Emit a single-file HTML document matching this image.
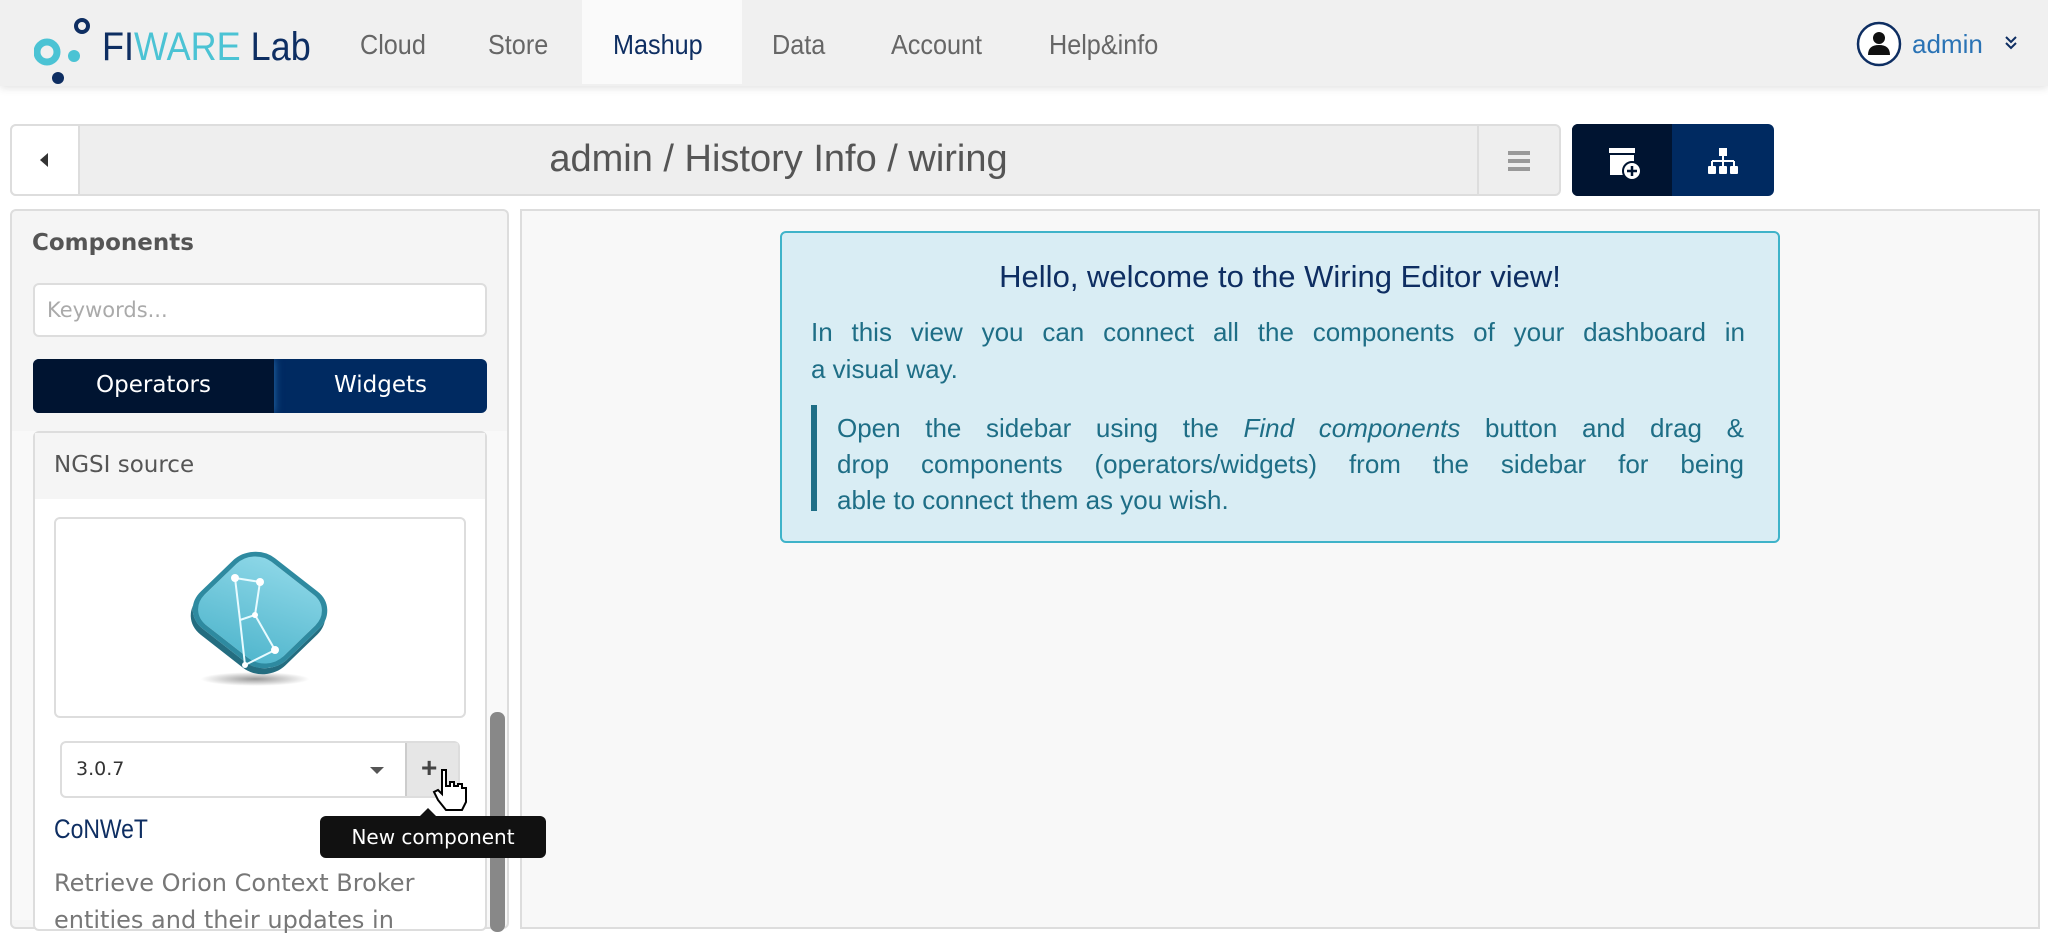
<!DOCTYPE html>
<html><head><meta charset="utf-8"><style>
*{box-sizing:border-box;margin:0;padding:0}
body{width:2048px;height:920px;overflow:hidden;background:#fff;font-family:"Liberation Sans",sans-serif;position:relative}
.abs{position:absolute}
.nav{left:0;top:0;width:2048px;height:86px;background:#f0f0f0;box-shadow:0 2px 8px rgba(0,0,0,.12)}
.navl{top:29px;font-size:28px;color:#666;transform:scaleX(.9);transform-origin:left}
.dv{font-family:"DejaVu Sans",sans-serif}
.j{text-align:justify;text-align-last:justify;white-space:nowrap;display:block}
.top{z-index:10}
</style></head><body>
<div class="abs nav"></div>
<svg class="abs" style="left:34px;top:18px" width="60" height="68" viewBox="0 0 60 68">
<circle cx="13" cy="34" r="10" fill="none" stroke="#4bc3d4" stroke-width="7"/>
<circle cx="48" cy="8" r="6" fill="none" stroke="#0e2e62" stroke-width="4"/>
<circle cx="40" cy="38" r="6" fill="#4bc3d4"/>
<circle cx="24" cy="60" r="6" fill="#0e2e62"/>
</svg>
<div class="abs" style="left:102px;top:25px;font-size:40px;transform:scaleX(.9);transform-origin:left"><span style="color:#0e2e62">FI</span><span style="color:#4bc3d4">WARE</span><span style="color:#0e2e62"> Lab</span></div>
<div class="abs" style="left:582px;top:0;width:160px;height:84px;background:#fafafa"></div>
<div class="abs navl" style="left:360px">Cloud</div>
<div class="abs navl" style="left:488px">Store</div>
<div class="abs navl" style="left:613px;color:#0e2e62">Mashup</div>
<div class="abs navl" style="left:772px">Data</div>
<div class="abs navl" style="left:891px">Account</div>
<div class="abs navl" style="left:1049px">Help&amp;info</div>
<svg class="abs" style="left:1856px;top:21px" width="46" height="46" viewBox="0 0 46 46"><circle cx="23" cy="23" r="21" fill="#fff" stroke="#0e2e62" stroke-width="2.5"/><circle cx="23" cy="17" r="6" fill="#111"/><path d="M12 34 Q12 24 23 24 Q34 24 34 34 Z" fill="#111"/></svg>
<div class="abs" style="left:1912px;top:29px;font-size:26px;color:#2a73b5">admin</div>
<svg class="abs" style="left:2004px;top:35px" width="14" height="16" viewBox="0 0 14 16"><path d="M2 2l5 5 5-5M2 8l5 5 5-5" stroke="#0e2e62" stroke-width="2" fill="none"/></svg>

<div class="abs" style="left:10px;top:124px;width:1551px;height:72px;background:#eee;border:2px solid #ddd;border-radius:6px"></div>
<div class="abs" style="left:10px;top:124px;width:70px;height:72px;background:#fff;border:2px solid #ddd;border-radius:6px 0 0 6px"></div>
<div class="abs" style="left:40px;top:153px;width:0;height:0;border-top:7px solid transparent;border-bottom:7px solid transparent;border-right:8px solid #333"></div>
<div class="abs" style="left:1477px;top:126px;width:2px;height:68px;background:#ddd"></div>
<div class="abs" style="left:1508px;top:151px;width:22px;height:4px;background:#999;box-shadow:0 8px 0 #999,0 16px 0 #999"></div>
<div class="abs" style="left:80px;top:138px;width:1397px;text-align:center;font-size:38px;color:#555">admin / History Info / wiring</div>
<div class="abs" style="left:1572px;top:124px;width:202px;height:72px;background:#002a61;border-radius:6px;overflow:hidden"><div style="width:100px;height:72px;background:#001431"></div></div>
<svg class="abs" style="left:1606px;top:146px" width="36" height="36" viewBox="0 0 36 36"><rect x="3" y="2" width="26" height="5" fill="#fff"/><rect x="4" y="9" width="24" height="20" fill="#fff"/><circle cx="26" cy="25" r="9" fill="#fff" stroke="#001431" stroke-width="2"/><path d="M26 20v10M21 25h10" stroke="#001431" stroke-width="2.5"/></svg>
<svg class="abs" style="left:1706px;top:146px" width="34" height="32" viewBox="0 0 34 32"><rect x="13" y="2" width="8" height="8" fill="#fff"/><path d="M17 10v5M6 15h22M6 15v5M17 15v5M28 15v5" stroke="#fff" stroke-width="2"/><rect x="2" y="20" width="8" height="8" rx="1" fill="#fff"/><rect x="13" y="20" width="8" height="8" rx="1" fill="#fff"/><rect x="24" y="20" width="8" height="8" rx="1" fill="#fff"/></svg>

<div class="abs" style="left:10px;top:209px;width:499px;height:720px;background:#f5f5f5;border:2px solid #ddd;border-radius:6px"></div>
<div class="abs dv" style="left:32px;top:230px;font-size:23px;font-weight:bold;color:#555">Components</div>
<div class="abs dv" style="left:33px;top:283px;width:454px;height:54px;background:#fff;border:2px solid #ddd;border-radius:6px;padding:13px 12px;font-size:21px;color:#aaa">Keywords...</div>
<div class="abs" style="left:33px;top:359px;width:454px;height:54px;background:#002a61;border-radius:6px;overflow:hidden"><div style="width:241px;height:54px;background:#001431;box-shadow:0 0 8px #2a73b5"></div></div>
<div class="abs dv" style="left:33px;top:372px;width:241px;text-align:center;font-size:23px;color:#fff">Operators</div>
<div class="abs dv" style="left:274px;top:372px;width:213px;text-align:center;font-size:23px;color:#fff">Widgets</div>
<div class="abs" style="left:12px;top:431px;width:495px;height:489px;background:#f9f9f9"></div>
<div class="abs" style="left:33px;top:431px;width:454px;height:500px;background:#fff;border:2px solid #ddd;border-radius:6px"></div>
<div class="abs" style="left:35px;top:433px;width:450px;height:66px;background:#f5f5f5"></div>
<div class="abs dv" style="left:54px;top:452px;font-size:23px;color:#555">NGSI source</div>
<div class="abs" style="left:54px;top:517px;width:412px;height:201px;border:2px solid #ddd;border-radius:6px;background:#fff"></div>
<div class="abs" style="left:200px;top:672px;width:110px;height:14px;border-radius:50%;background:radial-gradient(#999,transparent 70%)"></div>
<div class="abs" style="left:205px;top:560px;width:110px;height:100px;border-radius:28px;background:linear-gradient(160deg,#8fd8e8,#4fb5cc);border:5px solid #2e8aa0;box-shadow:3px 6px 0 #246d80;transform:rotate(38deg) skewX(-8deg)"></div>
<svg class="abs" style="left:205px;top:560px" width="110" height="110" viewBox="0 0 110 110"><path d="M30 18L55 22L50 55L70 90L40 105L35 60L30 18 M50 55L35 60" stroke="#e8fbff" stroke-width="2" fill="none"/><g fill="#fff"><circle cx="30" cy="18" r="4"/><circle cx="55" cy="22" r="4"/><circle cx="50" cy="55" r="3"/><circle cx="70" cy="90" r="4"/><circle cx="40" cy="105" r="3"/></g></svg>
<div class="abs" style="left:60px;top:741px;width:400px;height:57px;border:2px solid #ddd;border-radius:6px;background:#fff"></div>
<div class="abs" style="left:405px;top:743px;width:53px;height:53px;background:#e6e6e6;border-left:2px solid #ccc"></div>
<div class="abs dv" style="left:76px;top:758px;font-size:19px;color:#333">3.0.7</div>
<div class="abs" style="left:370px;top:767px;border-left:7px solid transparent;border-right:7px solid transparent;border-top:7px solid #555"></div>
<div class="abs" style="left:421px;top:752px;font-size:28px;font-weight:bold;color:#444">+</div>
<div class="abs" style="left:54px;top:814px;font-size:27px;color:#0e2e62;transform:scaleX(.85);transform-origin:left">CoNWeT</div>
<div class="abs dv" style="left:54px;top:865px;font-size:24px;color:#777;line-height:37px">Retrieve Orion Context Broker<br>entities and their updates in</div>
<div class="abs" style="left:490px;top:712px;width:15px;height:220px;background:#888;border-radius:7px"></div>

<div class="abs" style="left:520px;top:209px;width:1520px;height:720px;background:#f8f8f8;border:2px solid #ddd"></div>
<div class="abs" style="left:780px;top:231px;width:1000px;height:312px;background:#d9edf4;border:2px solid #3fb3c9;border-radius:6px"></div>
<div class="abs" style="left:780px;top:259px;width:1000px;text-align:center;font-size:31px;color:#0e2e62">Hello, welcome to the Wiring Editor view!</div>
<div class="abs" style="left:811px;top:314px;width:934px;font-size:26px;line-height:37px;color:#1e6e86"><span class="j">In this view you can connect all the components of your dashboard in</span>a visual way.</div>
<div class="abs" style="left:811px;top:405px;width:6px;height:106px;background:#1e6e86"></div>
<div class="abs" style="left:837px;top:410px;width:907px;font-size:26px;line-height:36px;color:#1e6e86"><span class="j">Open the sidebar using the <i>Find components</i> button and drag &amp;</span><span class="j">drop components (operators/widgets) from the sidebar for being</span>able to connect them as you wish.</div>

<div class="abs top" style="left:420px;top:808px;border-left:8px solid transparent;border-right:8px solid transparent;border-bottom:8px solid #111"></div>
<div class="abs dv top" style="left:320px;top:816px;width:226px;height:42px;background:#111;border-radius:6px;color:#fff;font-size:20px;text-align:center;line-height:42px">New component</div>
<svg class="abs top" style="left:430px;top:768px" width="40" height="46" viewBox="0 0 20 23"><path d="M6 1h2v8h2v-2h2v2h2v-1h2v2h2v7l-2 4h-8l-4-5-2-4 2-1 2 2V1z" fill="#fff" stroke="#000" stroke-width="1"/></svg>
</body></html>
